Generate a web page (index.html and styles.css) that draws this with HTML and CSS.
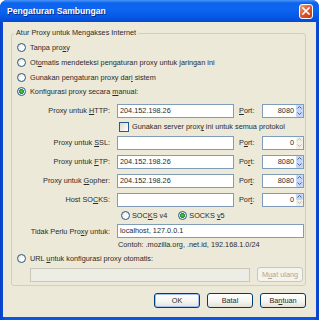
FILE: index.html
```html
<!DOCTYPE html>
<html lang="id">
<head>
    <meta charset="UTF-8">
    <title>Pengaturan Sambungan</title>
    <link rel="stylesheet" href="styles.css">
</head>
<body>

    <div class="window">
        <div class="titlebar">
            <span class="title">Pengaturan Sambungan</span>
            <span class="close">
                <svg width="8" height="8" viewBox="0 0 8 8"><path d="M1 1 L7 7 M7 1 L1 7" stroke="#fff" stroke-width="1.6" stroke-linecap="square"/></svg>
            </span>
        </div>

        <div class="panel">
            <fieldset class="group">
                <legend>Atur Proxy untuk Mengakses Internet</legend>

                <div class="opt"><span class="radio"></span><span>Tanpa pro<u>x</u>y</span></div>
                <div class="opt"><span class="radio"></span><span>Ot<u>o</u>matis mendeteksi pengaturan proxy untuk jaringan ini</span></div>
                <div class="opt short"><span class="radio"></span><span>Gunakan pengaturan proxy dar<u>i</u> sistem</span></div>
                <div class="opt short"><span class="radio on"></span><span>Konfigurasi proxy secara <u>m</u>anual:</span></div>

                <div class="proxy">
                    <span class="lbl">Proxy untuk <u>H</u>TTP:</span>
                    <span class="field">204.152.198.26</span>
                    <span class="plbl"><u>P</u>ort:</span>
                    <span class="spin"><span class="val">8080</span><span class="arrows"><span class="up"></span><span class="down"></span></span></span>

                    <span class="check-row"><span class="check"></span><span>Gunakan server prox<u>y</u> ini untuk semua protokol</span></span>

                    <span class="lbl">Proxy untuk <u>S</u>SL:</span>
                    <span class="field"></span>
                    <span class="plbl">P<u>o</u>rt:</span>
                    <span class="spin"><span class="val">0</span><span class="arrows"><span class="up off"></span><span class="down off"></span></span></span>

                    <span class="lbl">Proxy untuk <u>F</u>TP:</span>
                    <span class="field">204.152.198.26</span>
                    <span class="plbl">Po<u>r</u>t:</span>
                    <span class="spin"><span class="val">8080</span><span class="arrows"><span class="up"></span><span class="down"></span></span></span>

                    <span class="lbl">Proxy untuk <u>G</u>opher:</span>
                    <span class="field">204.152.198.26</span>
                    <span class="plbl">Por<u>t</u>:</span>
                    <span class="spin"><span class="val">8080</span><span class="arrows"><span class="up"></span><span class="down"></span></span></span>

                    <span class="lbl">Host SO<u>C</u>KS:</span>
                    <span class="field"></span>
                    <span class="plbl">Por<u>t</u>:</span>
                    <span class="spin"><span class="val">0</span><span class="arrows"><span class="up"></span><span class="down off"></span></span></span>

                    <span class="socks-row">
                        <span class="socks"><span class="radio"></span><span>SOC<u>K</u>S v4</span></span>
                        <span class="socks"><span class="radio on"></span><span>SOCKS <u>v</u>5</span></span>
                    </span>

                    <span class="lbl">Tidak Perlu Pro<u>x</u>y untuk:</span>
                    <span class="field wide">localhost, 127.0.0.1</span>

                    <span class="hint">Contoh: .mozilla.org, .net.id, 192.168.1.0/24</span>
                </div>

                <div class="opt url"><span class="radio"></span><span>URL <u>u</u>ntuk konfigurasi proxy otomatis:</span></div>
                <div class="url-row">
                    <span class="field off"></span>
                    <span class="btn off"><span>M<u>u</u>at ulang</span></span>
                </div>
            </fieldset>

            <div class="buttons">
                <span class="btn default">OK</span>
                <span class="btn">Batal</span>
                <span class="btn"><span>Ba<u>n</u>tuan</span></span>
            </div>
        </div>
    </div>

</body>
</html>
```

FILE: styles.css
```css
* {
    box-sizing: border-box;
}
body {
    margin: 0;
    background: #fff;
    font-family: "Liberation Sans", Arial, sans-serif;
    font-size: 7.3px;
    color: #2b2b2b;
}
u {
    text-decoration-thickness: 1px;
}

/* window frame */
.window {
    width: 319px;
    height: 320px;
    background: linear-gradient(to right, #0842c8, #0b55e6 2%, #0b55e6 98%, #0842c8);
    border-radius: 7px 7px 0 0;
    display: flex;
    flex-direction: column;
    overflow: hidden;
}
.titlebar {
    height: 22px;
    flex: none;
    display: flex;
    align-items: center;
    justify-content: space-between;
    padding: 0 6px 0 7px;
    background: linear-gradient(to bottom, #4a97fb 0%, #0c62ec 14%, #0e66f0 40%, #0559e6 75%, #0449d0 100%);
}
.title {
    color: #fff;
    font-weight: bold;
    font-size: 8.6px;
    text-shadow: 1px 1px 0 #0b2a8c;
}
.close {
    width: 14px;
    height: 15px;
    border: 1px solid #fff;
    border-radius: 3px;
    background: linear-gradient(135deg, #f0a080, #dc5630 50%, #c2391a);
    display: flex;
    align-items: center;
    justify-content: center;
}
.panel {
    flex: 1;
    margin: 0 3px 3px;
    background: #ece9d8;
    padding: 6px 10px 0 8px;
}

/* group box */
.group {
    width: 295px;
    margin: 0;
    padding: 2px 0 3px 0;
    border: 1px solid #d0d0bf;
    border-radius: 3px;
}
.group legend {
    margin-left: 2px;
    padding: 0 2px;
    line-height: 10px;
}

/* radios and checks */
.opt {
    display: flex;
    align-items: center;
    gap: 4px;
    height: 15px;
    padding-left: 5px;
    white-space: nowrap;
}
.opt.short {
    height: 14px;
}
.opt.url {
    height: 14px;
    margin-top: 2px;
}
.radio {
    flex: none;
    width: 9px;
    height: 9px;
    border-radius: 50%;
    border: 1px solid #27598a;
    background: radial-gradient(circle at 65% 65%, #ffffff 20%, #e9e7df 70%, #d3d0c5 100%);
}
.radio.on {
    background: radial-gradient(circle, #55d655 0, #27a327 1.6px, #1e8c1e 2.2px, transparent 2.5px),
        radial-gradient(circle at 65% 65%, #ffffff 20%, #e9e7df 70%, #d3d0c5 100%);
}
.check {
    flex: none;
    width: 10px;
    height: 10px;
    border: 1px solid #27598a;
    background: linear-gradient(135deg, #dcd9cf, #fff);
}

/* proxy grid */
.proxy {
    display: grid;
    grid-template-columns: 105px 117px 28px 42px;
    grid-template-rows: 19px 13px 19px 19px 19px 19px 13px 18px 9px;
    align-items: center;
    margin-top: 3px;
}
.lbl {
    text-align: right;
    padding-right: 7px;
    white-space: nowrap;
}
.plbl {
    padding-left: 5px;
}
.field {
    height: 14px;
    border: 1px solid #7f9db9;
    background: #fff;
    padding-left: 2px;
    line-height: 12px;
    white-space: nowrap;
}
.field.wide {
    grid-column: 2 / 5;
}
.field.off {
    width: 220px;
    background: #eeede5;
    border-color: #c9c7ba;
}
.check-row {
    grid-column: 2 / 5;
    display: flex;
    align-items: center;
    gap: 3px;
    padding-left: 2px;
    white-space: nowrap;
}
.socks-row {
    grid-column: 2 / 5;
    display: flex;
    align-items: center;
    gap: 11px;
    padding-left: 4px;
}
.socks {
    display: flex;
    align-items: center;
    gap: 2px;
    white-space: nowrap;
}
.hint {
    grid-column: 2 / 5;
    padding-left: 1px;
    line-height: 9px;
    white-space: nowrap;
}

/* spinner */
.spin {
    height: 14px;
    display: flex;
    border: 1px solid #7f9db9;
    background: #fff;
}
.val {
    flex: 1;
    text-align: right;
    padding-right: 2px;
    line-height: 12px;
}
.arrows {
    width: 7px;
    display: flex;
    flex-direction: column;
}
.up,
.down {
    flex: 1;
    border-radius: 1px;
    background-color: #c6d6fb;
    background-repeat: no-repeat;
    background-position: center;
}
.up {
    background-image: url("data:image/svg+xml,%3Csvg xmlns='http://www.w3.org/2000/svg' width='5' height='3'%3E%3Cpath d='M0.5 2.5 L2.5 0.5 L4.5 2.5' fill='none' stroke='%234d6185' stroke-width='1'/%3E%3C/svg%3E");
}
.down {
    background-image: url("data:image/svg+xml,%3Csvg xmlns='http://www.w3.org/2000/svg' width='5' height='3'%3E%3Cpath d='M0.5 0.5 L2.5 2.5 L4.5 0.5' fill='none' stroke='%234d6185' stroke-width='1'/%3E%3C/svg%3E");
}
.up.off {
    background-color: #f1efe6;
    background-image: url("data:image/svg+xml,%3Csvg xmlns='http://www.w3.org/2000/svg' width='5' height='3'%3E%3Cpath d='M0.5 2.5 L2.5 0.5 L4.5 2.5' fill='none' stroke='%23b8b6ac' stroke-width='1'/%3E%3C/svg%3E");
}
.down.off {
    background-color: #f1efe6;
    background-image: url("data:image/svg+xml,%3Csvg xmlns='http://www.w3.org/2000/svg' width='5' height='3'%3E%3Cpath d='M0.5 0.5 L2.5 2.5 L4.5 0.5' fill='none' stroke='%23b8b6ac' stroke-width='1'/%3E%3C/svg%3E");
}

/* url row and buttons */
.url-row {
    display: flex;
    align-items: center;
    gap: 7px;
    height: 15px;
    margin-top: 2px;
    padding-left: 18px;
}
.btn {
    width: 46px;
    height: 15px;
    display: flex;
    align-items: center;
    justify-content: center;
    border: 1px solid #003c74;
    border-radius: 3px;
    background: linear-gradient(to bottom, #ffffff, #f4f4f0 60%, #e3e0d5);
    white-space: nowrap;
}
.btn.default {
    box-shadow: inset 0 0 0 1px #a6bff2;
}
.btn.off {
    color: #aca899;
    border-color: #c9c7ba;
    background: #f4f3ee;
}
.buttons {
    display: flex;
    justify-content: flex-end;
    gap: 7px;
    margin-top: 7px;
}
```
